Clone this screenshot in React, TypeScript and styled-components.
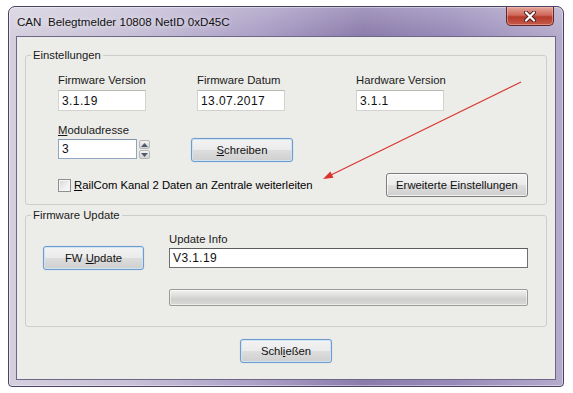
import styled, { createGlobalStyle } from "styled-components";

const GlobalStyle = createGlobalStyle`
  html, body {
    margin: 0;
    padding: 0;
    background: #ffffff;
  }
  body {
    font-family: "Liberation Sans", Arial, sans-serif;
    font-size: 11.3px;
    color: #000;
  }
`;

const Page = styled.div`
  width: 573px;
  height: 393px;
  box-sizing: border-box;
  padding: 6px 0 0 8px;
`;

const Window = styled.div`
  width: 556px;
  height: 381px;
  box-sizing: border-box;
  display: flex;
  flex-direction: column;
  padding: 0 7px 6px 7px;
  border: 1px solid #4a4262;
  border-radius: 7px 7px 4px 4px;
  background:
    linear-gradient(180deg, rgba(255, 255, 255, 0.22) 0px, rgba(255, 255, 255, 0) 30px),
    linear-gradient(90deg, #d4cfdd 0%, #c7c0d7 22%, #a99dc4 46%, #8a7bab 64%, #978ab8 80%, #b5abcb 100%);
  box-shadow: inset 0 0 0 1px rgba(255, 255, 255, 0.4);
`;

const TitleBar = styled.div`
  height: 29px;
  flex: none;
  display: flex;
  justify-content: space-between;
  align-items: center;
`;

const TitleText = styled.span`
  padding-left: 1px;
  font-size: 11.6px;
  color: #111;
  text-shadow: 0 0 6px rgba(255, 255, 255, 0.9);
`;

const CloseButton = styled.div`
  align-self: flex-start;
  width: 48px;
  height: 19px;
  margin-right: 2px;
  box-sizing: border-box;
  display: flex;
  align-items: center;
  justify-content: center;
  border: 1px solid #5a2a2e;
  border-top: none;
  border-radius: 0 0 5px 5px;
  background: linear-gradient(180deg, #e3a699 0%, #d0685a 45%, #b53a2c 55%, #c65a48 100%);
  box-shadow: inset 0 0 0 1px rgba(255, 200, 190, 0.45);
`;

const Client = styled.div`
  position: relative;
  flex: 1;
  display: flex;
  flex-direction: column;
  padding-top: 11px;
  background: #ecece8;
  border: 1px solid #6e6688;
`;

const Group = styled.fieldset<{ $gap?: number }>`
  margin: ${(p) => p.$gap ?? 0}px 8px 0 8px;
  padding: 0;
  min-width: 0;
  border: 1px solid #cdcdc9;
  border-radius: 3px;
`;

const Legend = styled.legend`
  margin-left: 5px;
  padding: 0 2px;
  line-height: 14px;
  color: #1a1a1a;
`;

const SettingsBody = styled.div`
  padding: 11px 18px 7px 32px;
  display: flex;
  flex-direction: column;
`;

const InfoGrid = styled.div`
  display: grid;
  grid-template-columns: 139px 159px auto;
`;

const Field = styled.div<{ $width?: number }>`
  display: flex;
  flex-direction: column;
  width: ${(p) => (p.$width ? `${p.$width}px` : "auto")};
`;

const Label = styled.label`
  line-height: 14px;
  color: #1a1a1a;
  white-space: nowrap;
`;

const TextBox = styled.input<{ $tone?: "soft" | "blue" | "dark"; $h?: number; $w?: number }>`
  box-sizing: border-box;
  width: ${(p) => (p.$w ? `${p.$w}px` : "100%")};
  height: ${(p) => p.$h ?? 20}px;
  margin: ${(p) => (p.$h === 21 ? 3 : 2)}px 0 0 0;
  padding: 0 0 0 3px;
  font-family: "Liberation Sans", Arial, sans-serif;
  font-size: 12px;
  letter-spacing: 0.4px;
  color: #111;
  background: #fff;
  outline: none;
  border: 1px solid
    ${(p) => (p.$tone === "dark" ? "#6f6f6f" : p.$tone === "blue" ? "#8fa6c0" : "#d2d2ce")};
  border-top-color: ${(p) => (p.$tone === "dark" ? "#5c5c5c" : p.$tone === "blue" ? "#7f93ab" : "#b9b9b6")};
`;

const Row = styled.div<{ $top: number; $spread?: boolean }>`
  display: flex;
  align-items: ${(p) => (p.$spread ? "center" : "flex-start")};
  justify-content: ${(p) => (p.$spread ? "space-between" : "flex-start")};
  margin-top: ${(p) => p.$top}px;
`;

const SpinInput = styled.div`
  display: flex;
  align-items: flex-end;
  width: 92px;
`;

const SpinBox = styled.div`
  display: flex;
  flex-direction: column;
  gap: 1px;
  width: 13px;
  margin-left: 2px;
`;

const SpinButton = styled.div`
  height: 9px;
  box-sizing: border-box;
  display: flex;
  align-items: center;
  justify-content: center;
  border: 1px solid #b7b7b7;
  border-radius: 2px;
  background: linear-gradient(180deg, #f4f4f4 0%, #e2e2e2 50%, #d4d4d4 100%);
`;

const Button = styled.button<{ $w: number; $focus?: boolean; $top?: number }>`
  flex: none;
  width: ${(p) => p.$w}px;
  height: 24px;
  margin-top: ${(p) => p.$top ?? 0}px;
  padding: 0;
  font-family: "Liberation Sans", Arial, sans-serif;
  font-size: 11.3px;
  color: #111;
  border-radius: 3px;
  border: 1px solid ${(p) => (p.$focus ? "#6e9ccb" : "#7d7d7d")};
  background: linear-gradient(180deg, #f3f3f3 0%, #ebebeb 48%, #dddddd 52%, #cfcfcf 100%);
  box-shadow: ${(p) =>
    p.$focus ? "inset 0 0 0 1px #cfe3f4, 0 0 1px #9cc3e6" : "inset 0 0 0 1px rgba(255,255,255,0.7)"};
`;

const CheckLine = styled.div`
  display: flex;
  align-items: center;
  gap: 3px;
`;

const CheckBox = styled.span`
  width: 13px;
  height: 13px;
  box-sizing: border-box;
  border: 1px solid #8e8f8f;
  background: linear-gradient(135deg, #d6d6d6 0%, #f0f0f0 60%, #fbfbfb 100%);
  box-shadow: inset 0 0 0 1px #f4f4f4;
`;

const UpdateBody = styled.div`
  padding: 10px 18px 20px 17px;
  display: flex;
  align-items: flex-start;
`;

const UpdateColumn = styled.div`
  flex: 1;
  display: flex;
  flex-direction: column;
  margin-left: 25px;
`;

const Progress = styled.div`
  height: 17px;
  margin-top: 21px;
  box-sizing: border-box;
  border: 1px solid #9a9a98;
  border-radius: 2px;
  background: linear-gradient(180deg, #f2f2f0 0%, #dcdcda 40%, #cfcfcd 60%, #d9d9d7 100%);
  box-shadow: inset 0 0 0 1px rgba(255, 255, 255, 0.5);
`;

const Footer = styled.div`
  display: flex;
  justify-content: center;
  margin-top: 12px;
`;

const Annotation = styled.svg`
  position: absolute;
  left: 0;
  top: 0;
  width: 100%;
  height: 100%;
  pointer-events: none;
`;

function Arrow({ up }: { up?: boolean }) {
  return (
    <svg width="7" height="4" viewBox="0 0 7 4">
      <polygon points={up ? "0,4 3.5,0 7,4" : "0,0 3.5,4 7,0"} fill="#4d5a6a" />
    </svg>
  );
}

export default function App() {
  return (
    <>
      <GlobalStyle />
      <Page>
        <Window>
          <TitleBar>
            <TitleText>CAN&nbsp; Belegtmelder 10808 NetID 0xD45C</TitleText>
            <CloseButton>
              <svg width="12" height="11" viewBox="0 0 12 11">
                <path d="M2 1.5 L10 9.5 M10 1.5 L2 9.5" stroke="#4a1f22" strokeWidth="4" strokeLinecap="round" />
                <path d="M2 1.5 L10 9.5 M10 1.5 L2 9.5" stroke="#ffffff" strokeWidth="2.2" strokeLinecap="round" />
              </svg>
            </CloseButton>
          </TitleBar>
          <Client>
            <Group>
              <Legend>Einstellungen</Legend>
              <SettingsBody>
                <InfoGrid>
                  <Field>
                    <Label>Firmware Version</Label>
                    <TextBox $h={21} $w={88} readOnly value="3.1.19" />
                  </Field>
                  <Field>
                    <Label>Firmware Datum</Label>
                    <TextBox $h={21} $w={88} readOnly value="13.07.2017" />
                  </Field>
                  <Field>
                    <Label>Hardware Version</Label>
                    <TextBox $h={21} $w={88} readOnly value="3.1.1" />
                  </Field>
                </InfoGrid>
                <Row $top={12}>
                  <Field $width={133}>
                    <Label>
                      <u>M</u>oduladresse
                    </Label>
                    <SpinInput>
                      <TextBox $tone="blue" readOnly value="3" />
                      <SpinBox>
                        <SpinButton>
                          <Arrow up />
                        </SpinButton>
                        <SpinButton>
                          <Arrow />
                        </SpinButton>
                      </SpinBox>
                    </SpinInput>
                  </Field>
                  <Button $w={102} $top={15} $focus>
                    <u>S</u>chreiben
                  </Button>
                </Row>
                <Row $top={11} $spread>
                  <CheckLine>
                    <CheckBox />
                    <span>
                      <u>R</u>ailCom Kanal 2 Daten an Zentrale weiterleiten
                    </span>
                  </CheckLine>
                  <Button $w={142}>Erweiterte Einstellungen</Button>
                </Row>
              </SettingsBody>
            </Group>
            <Group $gap={3}>
              <Legend>Firmware Update</Legend>
              <UpdateBody>
                <Button $w={101} $top={14} $focus>
                  FW <u>U</u>pdate
                </Button>
                <UpdateColumn>
                  <Label>Update Info</Label>
                  <TextBox $tone="dark" readOnly value="V3.1.19" />
                  <Progress />
                </UpdateColumn>
              </UpdateBody>
            </Group>
            <Footer>
              <Button $w={92} $focus>
                Schl<u>i</u>eßen
              </Button>
            </Footer>
            <Annotation>
              <line x1="504" y1="45" x2="314.5" y2="137.8" stroke="#d9332b" strokeWidth="1.1" />
              <polygon points="306,142 316.5,140.7 313.4,134.5" fill="#d9332b" />
            </Annotation>
          </Client>
        </Window>
      </Page>
    </>
  );
}
